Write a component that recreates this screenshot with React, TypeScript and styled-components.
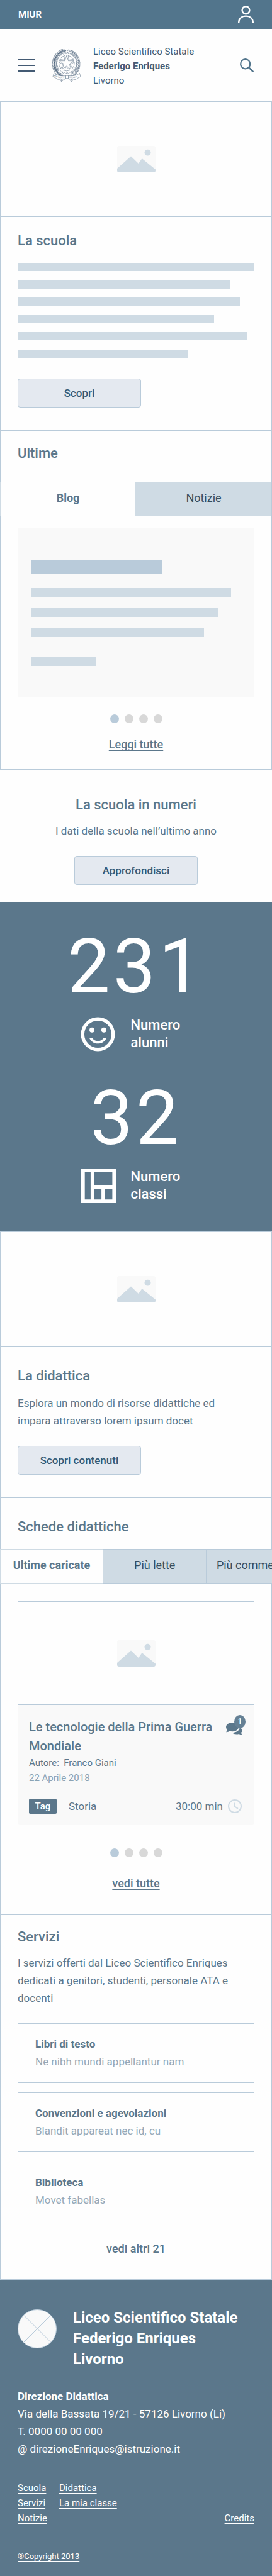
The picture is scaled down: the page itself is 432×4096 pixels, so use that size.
import React, { useState } from 'react';
import styled, { createGlobalStyle, ThemeProvider } from 'styled-components';

const theme = {
  page: '#fefefe',
  ink: '#435a73',
  navy: '#335975',
  steel: '#5b778b',
  bar: '#52758c',
  line: '#b9cbda',
  mist: '#cfdbe4',
  fog: '#e4e9f0',
  panel: '#f9f9f9',
  muted: '#95a8b7',
  dot: '#d8d8d8',
};

const GlobalStyle = createGlobalStyle`
  *, *::before, *::after { box-sizing: border-box; }
  body {
    margin: 0;
    background: ${theme.page};
    color: ${theme.steel};
    font: 400 17px/28px Roboto, "Liberation Sans", sans-serif;
  }
  h1, h2, h3, p, ul { margin: 0; padding: 0; }
  ul { list-style: none; }
  button { font: inherit; color: inherit; padding: 0; border: 0; background: none; cursor: pointer; }
  svg { display: block; flex: none; }
`;

/* ---------- top of the page ---------- */

const TopBar = styled.div`
  display: flex;
  align-items: center;
  justify-content: space-between;
  height: 46px;
  padding: 0 29px;
  background: ${theme.bar};
  color: #fff;
`;

const Ministry = styled.a`
  color: inherit;
  font-size: 15px;
  font-weight: 700;
  text-decoration: none;
`;

const Header = styled.header`
  display: flex;
  align-items: center;
  padding: 21px 29px 21px 28px;
`;

const MenuButton = styled.button`
  display: grid;
  gap: 7px;
  width: 28px;
  margin-right: 27px;
`;

const MenuLine = styled.span`
  height: 2px;
  background: ${theme.ink};
`;

const SchoolName = styled.h1`
  flex: 1;
  margin-left: 19px;
  padding-top: 4px;
  color: ${theme.ink};
  font-size: 15px;
  font-weight: 400;
  line-height: 23px;
`;

const NameLine = styled.span<{ $strong?: boolean }>`
  display: block;
  font-weight: ${p => (p.$strong ? 700 : 400)};
`;

/* ---------- shared parts ---------- */

const Frame = styled.section`
  border: 1px solid ${theme.line};
`;

const Placeholder = styled.div`
  display: flex;
  align-items: center;
  justify-content: center;
  height: 183px;
  border-bottom: 1px solid ${theme.line};
`;

const Block = styled.div<{ $top: number; $bottom: number; $ruled?: boolean }>`
  padding: ${p => p.$top}px 27px ${p => p.$bottom}px;
  border-bottom: ${p => (p.$ruled ? `1px solid ${theme.line}` : '0')};
`;

const Heading = styled.h2`
  font-size: 22px;
  font-weight: 500;
  line-height: 30px;
`;

const Lead = styled.p<{ $gap: number }>`
  margin: ${p => p.$gap}px 0 26px;
  padding-right: 20px;
`;

const ActionButton = styled.button`
  width: 196px;
  height: 46px;
  border: 1px solid ${theme.line};
  border-radius: 4px;
  background: ${theme.fog};
  color: ${theme.navy};
  font-weight: 500;
`;

const Bar = styled.div<{ $width: number; $height?: number; $dark?: boolean }>`
  width: ${p => p.$width}%;
  height: ${p => p.$height ?? 14}px;
  background: ${p => (p.$dark ? theme.line : theme.mist)};
`;

const TextBars = styled.div`
  display: flex;
  flex-direction: column;
  justify-content: space-between;
  height: 151px;
  margin: 20px 0 33px;
`;

const TabList = styled.div`
  display: flex;
  height: 55px;
  margin: 0 -1px;
  overflow: hidden;
`;

const Tab = styled.button<{ $basis: number }>`
  flex: 0 0 ${p => p.$basis}%;
  padding-bottom: 3px;
  border: solid ${theme.line};
  border-width: 1px 1px 1px 0;
  background: ${theme.mist};
  color: #364d60;
  font-size: 18px;
  white-space: nowrap;

  &[aria-selected='true'] {
    border-color: ${theme.mist};
    background: transparent;
    color: ${theme.steel};
    font-weight: 700;
  }

  &:first-child { border-left-width: 1px; }
`;

const PagerRow = styled.div<{ $top: number; $bottom: number }>`
  display: flex;
  justify-content: center;
  gap: 9px;
  padding: ${p => p.$top}px 0 ${p => p.$bottom}px;
`;

const PagerDot = styled.button`
  width: 14px;
  height: 14px;
  border-radius: 50%;
  background: ${theme.dot};

  &[aria-current='true'] { background: ${theme.line}; }
`;

const MoreRow = styled.div<{ $bottom: number }>`
  padding-bottom: ${p => p.$bottom}px;
  line-height: 24px;
  text-align: center;
`;

const MoreLink = styled.a`
  color: inherit;
  font-size: 18px;
  font-weight: 500;
  text-decoration: underline 1px;
  text-decoration-skip-ink: none;
  text-underline-offset: 3px;
`;

/* ---------- blog preview ---------- */

const Preview = styled.div`
  margin: 18px 27px 0;
  padding: 51px 20px 42px 21px;
  background: ${theme.panel};
`;

const PreviewLines = styled.div`
  display: grid;
  gap: 18px;
  margin: 23px 0 31px;
`;

const PreviewRule = styled.div`
  width: 31%;
  height: 1px;
  margin-top: 6px;
  background: ${theme.line};
`;

/* ---------- school in numbers ---------- */

const NumbersIntro = styled.section`
  padding: 41px 28px 27px;
  text-align: center;

  ${Lead} { padding-right: 0; }
`;

const Numbers = styled.section`
  display: grid;
  justify-items: center;
  gap: 46px;
  padding: 43px 28px 45px;
  background: ${theme.steel};
  color: #fff;
`;

const Stat = styled.div`
  display: grid;
  justify-items: center;
  gap: 19px;
`;

const Figure = styled.div`
  font-size: 120px;
  letter-spacing: 5px;
  line-height: 120px;
`;

const StatLabel = styled.div`
  display: flex;
  align-items: center;
  gap: 24px;
  font-size: 22px;
  font-weight: 500;
  line-height: 28px;
`;

const StatText = styled.div`
  width: 96px;
`;

/* ---------- teaching card ---------- */

const Card = styled.article`
  margin: 28px 27px 0;
`;

const CardImage = styled.div`
  display: flex;
  align-items: center;
  justify-content: center;
  height: 165px;
  border: 1px solid ${theme.line};
`;

const CardBody = styled.div`
  padding: 16px 14px 18px 18px;
  border-radius: 4px;
  background: ${theme.panel};
`;

const CardHead = styled.div`
  display: flex;
  justify-content: space-between;
`;

const CardTitle = styled.h3`
  width: 304px;
  padding-top: 4px;
  font-size: 20px;
  font-weight: 500;
  line-height: 30px;
`;

const CommentButton = styled.button`
  position: relative;
  display: flex;
  align-items: flex-end;
  width: 31px;
  height: 32px;
`;

const Badge = styled.span`
  position: absolute;
  top: 0;
  right: 0;
  width: 18px;
  height: 21px;
  border-radius: 50%;
  background: #658094;
  color: #fff;
  font-size: 13px;
  font-weight: 500;
  line-height: 20px;
  text-align: center;
`;

const CardMeta = styled.p<{ $muted?: boolean }>`
  color: ${p => (p.$muted ? '#8ba2b3' : 'inherit')};
  font-size: 15px;
  line-height: 24px;
`;

const CardFoot = styled.div`
  display: flex;
  align-items: center;
  height: 24px;
  margin: 21px 6px 0 0;
`;

const Tag = styled.span`
  width: 44px;
  margin-right: 19px;
  border-radius: 2px;
  background: ${theme.steel};
  color: #fff;
  font-size: 15px;
  font-weight: 500;
  line-height: 24px;
  text-align: center;
`;

const Duration = styled.span`
  display: flex;
  align-items: center;
  gap: 8px;
  margin-left: auto;
`;

/* ---------- services ---------- */

const ServiceList = styled.ul`
  display: grid;
  gap: 15px;
  margin-bottom: 32px;
`;

const Service = styled.li`
  padding: 18px 27px 19px;
  border: 1px solid ${theme.line};
`;

const ServiceName = styled.h3`
  font-size: 17px;
  font-weight: 700;
  line-height: 28px;
`;

const ServiceText = styled.p`
  color: ${theme.muted};
`;

/* ---------- footer ---------- */

const Footer = styled.footer`
  padding: 44px 28px 21px;
  background: ${theme.steel};
  color: #fff;
`;

const FooterHead = styled.div`
  display: flex;
  align-items: flex-start;
  gap: 26px;
`;

const FooterMark = styled.svg`
  margin-top: 3px;
`;

const FooterName = styled.h2`
  font-size: 24px;
  font-weight: 700;
  line-height: 33px;
`;

const Address = styled.address`
  margin: 28px 0 36px;
  font-style: normal;
`;

const AddressLine = styled.p<{ $strong?: boolean }>`
  font-weight: ${p => (p.$strong ? 700 : 400)};
`;

const FooterNav = styled.nav`
  display: grid;
  grid-template-columns: 66px 1fr auto;
  font-size: 15px;
  line-height: 24px;
`;

const CreditsSlot = styled.div`
  align-self: end;
`;

const FooterLink = styled.a<{ $small?: boolean }>`
  color: inherit;
  font-size: ${p => (p.$small ? 13 : 15)}px;
  text-decoration: underline 1px;
  text-decoration-skip-ink: none;
  text-underline-offset: 3px;
`;

const Copyright = styled.p`
  margin-top: 39px;
  font-size: 13px;
  line-height: 20px;
`;

/* ---------- drawings ---------- */

const PictureIcon = () => (
  <svg width="61" height="42" viewBox="0 0 61 42" aria-hidden="true">
    <rect width="61" height="42" rx="3" fill="#f9f9f9" />
    <ellipse cx="48.5" cy="10.7" rx="5" ry="4.9" fill={theme.mist} />
    <path d="M0 36 22 16.500l12 11.500 5.500-8L61 37.500V39a3 3 0 0 1-3 3H3a3 3 0 0 1-3-3z" fill={theme.mist} />
  </svg>
);

const UserIcon = () => (
  <svg width="25" height="28" viewBox="0 0 25 28" fill="none" stroke="#fff" strokeWidth="2.400" aria-hidden="true">
    <ellipse cx="12.500" cy="7.200" rx="5.900" ry="6" />
    <path d="M1.200 28v-1.500C1.200 20.500 6 16.600 12.500 16.600s11.300 3.900 11.300 9.900V28" />
  </svg>
);

const SearchIcon = () => (
  <svg width="22" height="22" viewBox="0 0 22 22" fill="none" stroke={theme.bar} aria-hidden="true">
    <circle cx="8.700" cy="8.700" r="7.600" strokeWidth="2.200" />
    <path d="m14.300 14.300 6.300 6.300" strokeWidth="2.600" strokeLinecap="round" />
  </svg>
);

const SmileIcon = () => (
  <svg width="55" height="55" viewBox="1.800 1.800 20.400 20.400" fill="#fff" aria-hidden="true">
    <circle cx="15.500" cy="9.500" r="1.500" />
    <circle cx="8.500" cy="9.500" r="1.500" />
    <circle cx="12" cy="12" r="9" fill="none" stroke="#fff" strokeWidth="2" />
    <path d="M12 16c-1.480 0-2.750-.81-3.450-2H6.880c.8 2.050 2.790 3.500 5.120 3.500s4.320-1.450 5.120-3.500h-1.670c-.7 1.190-1.970 2-3.450 2z" />
  </svg>
);

const ClassesIcon = () => (
  <svg width="55" height="55" viewBox="0 0 55 55" aria-hidden="true">
    <path
      fill="#fff"
      fillRule="evenodd"
      d="M0 0h55v55H0zM5.700 5.700v43.600h9.200V5.700zM20.600 5.700v20.800h28.800V5.700zM20.600 32v17.300h11.500V32zM37.900 32v17.300h11.500V32z"
    />
  </svg>
);

const CommentsIcon = () => (
  <svg width="26" height="20" viewBox="0 0 26 20" fill={theme.steel} aria-hidden="true">
    <path d="M10.200 0C15.800 0 20 3 20 7s-4.200 7.200-9.800 7.200c-1.500 0-3-.2-4.300-.7C4.500 14.500 2.500 15.200 0 15.300c1.300-1.200 2-2.600 2-3.700C.8 10.400 0 8.800 0 7c0-4 4.600-7 10.200-7z" />
    <path d="M21.300 9.200c2.700-.7 4.300 1 4.300 3.300 0 1.500-.6 2.600-1.600 3.400.1 1.200.8 2.400 1.800 3.500-2 0-3.700-.4-5.200-1.400-1.300.4-2.700.6-4 .6-2.900 0-5.400-.8-7-2.500 6-.1 10.900-2.700 11.700-6.900z" />
  </svg>
);

const ClockIcon = () => (
  <svg width="22" height="22" viewBox="0 0 22 22" fill="none" stroke={theme.mist} strokeWidth="2" aria-hidden="true">
    <circle cx="11" cy="11" r="10" />
    <path d="M11 5.500v6l5 3.300" />
  </svg>
);

const rad = (deg: number) => (deg * Math.PI) / 180;
const at = (cx: number, cy: number, r: number, deg: number) =>
  `${(cx + r * Math.cos(rad(deg))).toFixed(2)} ${(cy + r * Math.sin(rad(deg))).toFixed(2)}`;

const STAR = Array.from({ length: 10 }, (_, i) => at(22.8, 22.4, i % 2 ? 4.6 : 12, -90 + i * 36)).join('L');

// The openings of the cog wheel between the arms of the star
const WINDOWS = Array.from({ length: 5 }, (_, i) => {
  const mid = -54 + i * 72;
  return `M${at(22.8, 22.4, 6, mid)}L${at(22.8, 22.4, 12.4, mid - 25)}A12.4 12.4 0 0 1 ${at(22.8, 22.4, 12.4, mid + 25)}Z`;
}).join('');

const COG = Array.from({ length: 24 }, (_, i) => {
  const a = i * 15;
  return `${at(22.8, 22.4, 15.2, a)}L${at(22.8, 22.4, 16.8, a + 2)}L${at(22.8, 22.4, 16.8, a + 7)}L${at(22.8, 22.4, 15.2, a + 9)}`;
}).join('L');

const OLIVE = Array.from({ length: 13 }, (_, i) => {
  const a = 118 + i * 11.2;
  return { x: 22.8 + 19.2 * Math.cos(rad(a)), y: 23.5 + 21 * Math.sin(rad(a)), turn: a + 90 };
});

const OAK = OLIVE.map(l => ({ x: 45.6 - l.x, y: l.y, turn: 180 - l.turn }));

const Emblem = () => (
  <svg width="46" height="52" viewBox="0 0 46 52" fill="none" stroke={theme.ink} strokeWidth="0.500" role="img" aria-label="Repubblica Italiana">
    <path d={`M${COG}Z`} />
    <path d={WINDOWS} />
    <path d={`M${STAR}Z`} fill={theme.page} />
    {OLIVE.map((l, i) => (
      <g key={i} transform={`translate(${l.x} ${l.y}) rotate(${l.turn})`} fill={theme.page}>
        <path d="M-4 0C-2-3.500 2-3.800 5-3 3-.5 0 1-4 0z" />
        <path d="M-4 0C-2 3.200 2 3.400 5 2.800 3 .2 0-1-4 0z" />
        <path d="M-5 0C-2-1.500 3-1.500 5.500 0 3 1.500-2 1.500-5 0zM-5 0H4" strokeWidth="0.700" />
      </g>
    ))}
    {OAK.map((l, i) => (
      <g key={i} transform={`translate(${l.x} ${l.y}) rotate(${l.turn})`} fill={theme.page}>
        <path d="M-4 0c0-2 1.500-2.500 2.500-1.800 0-1.800 2-2 2.700-.8.8-1.400 2.800-1 2.800.6 1.300.4 1.300 1.800 0 2 .2 1.900-1.700 2.300-2.700 1.100C.7 2.500-1.200 2.500-1.500 1.200-2.700 2.300-4 1.800-4 0z" />
        <path d="M-4 0h7M-1 0l1-1.500M1 0l1-1.300M-1 0l1 1.500" />
      </g>
    ))}
    <g fill={theme.page}>
      <path d="M21 43c-2.500 2.800-5 5-8 7l1.500.3-.2 1.500C18 49.500 21 47 23.500 44zM25 43c2 2.500 4.500 5 7.500 7l-1.500.3.200 1.500C28 49.800 25 47.500 22.500 44z" />
      <path d="M2.500 38.500C7 42 14 43.500 22 42.500l-.5 5C16 48.500 13 47 9.500 48.800 7 46.500 4 45.500 1 44z" />
      <path d="M43.500 38.500C39 42 32 43.500 25 42.500l.5 5c5 1 8-.5 11.500 1.300 2.500-2.300 5-3.300 8-4.800z" />
      <ellipse cx="23.500" cy="44.500" rx="2.300" ry="2.700" />
    </g>
    <path id="ribbon-left" d="M2.200 42.800Q10 47 21.500 46" stroke="none" />
    <path id="ribbon-right" d="M26.500 46Q36 47 44.500 42.500" stroke="none" />
    <g fill={theme.ink} stroke="none" fontFamily="Liberation Serif, serif" fontSize="2.800">
      <text><textPath href="#ribbon-left">REPVBBLICA</textPath></text>
      <text><textPath href="#ribbon-right">ITALIANA</textPath></text>
    </g>
  </svg>
);

/* ---------- behaviour ---------- */

const Tabs = ({ label, items, basis }: { label: string; items: string[]; basis: number }) => {
  const [active, setActive] = useState(0);
  return (
    <TabList role="tablist" aria-label={label}>
      {items.map((item, i) => (
        <Tab key={item} role="tab" $basis={basis} aria-selected={i === active} onClick={() => setActive(i)}>
          {item}
        </Tab>
      ))}
    </TabList>
  );
};

const Pager = ({ top, bottom }: { top: number; bottom: number }) => {
  const [page, setPage] = useState(0);
  return (
    <PagerRow $top={top} $bottom={bottom}>
      {[0, 1, 2, 3].map(i => (
        <PagerDot key={i} aria-label={`Pagina ${i + 1}`} aria-current={i === page} onClick={() => setPage(i)} />
      ))}
    </PagerRow>
  );
};

const SCHOOL_BARS = [100, 90, 94, 83, 97, 72];

const SERVICES = [
  ['Libri di testo', 'Ne nibh mundi appellantur nam'],
  ['Convenzioni e agevolazioni', 'Blandit appareat nec id, cu'],
  ['Biblioteca', 'Movet fabellas'],
];

const FOOTER_LINKS = [
  ['Scuola', 'Servizi', 'Notizie'],
  ['Didattica', 'La mia classe'],
];

export default function App() {
  return (
    <ThemeProvider theme={theme}>
      <GlobalStyle />
      <TopBar>
        <Ministry href="#miur">MIUR</Ministry>
        <button aria-label="Accedi"><UserIcon /></button>
      </TopBar>
      <Header>
        <MenuButton aria-label="Menu">
          <MenuLine /><MenuLine /><MenuLine />
        </MenuButton>
        <Emblem />
        <SchoolName>
          <NameLine>Liceo Scientifico Statale</NameLine>
          <NameLine $strong>Federigo Enriques</NameLine>
          <NameLine>Livorno</NameLine>
        </SchoolName>
        <button aria-label="Cerca"><SearchIcon /></button>
      </Header>

      <main>
        <Frame>
          <Placeholder><PictureIcon /></Placeholder>
          <Block $top={23} $bottom={36} $ruled>
            <Heading>La scuola</Heading>
            <TextBars>
              {SCHOOL_BARS.map((w, i) => <Bar key={i} $width={w} $height={13} />)}
            </TextBars>
            <ActionButton>Scopri</ActionButton>
          </Block>
          <Block $top={21} $bottom={30}>
            <Heading>Ultime</Heading>
          </Block>
          <Tabs label="Ultime" items={['Blog', 'Notizie']} basis={50} />
          <Preview>
            <Bar $width={62} $height={22} $dark />
            <PreviewLines>
              <Bar $width={95} />
              <Bar $width={89} />
              <Bar $width={82} />
            </PreviewLines>
            <Bar $width={31} $height={15} />
            <PreviewRule />
          </Preview>
          <Pager top={28} bottom={22} />
          <MoreRow $bottom={27}><MoreLink href="#blog">Leggi tutte</MoreLink></MoreRow>
        </Frame>

        <NumbersIntro>
          <Heading>La scuola in numeri</Heading>
          <Lead $gap={12}>I dati della scuola nell’ultimo anno</Lead>
          <ActionButton>Approfondisci</ActionButton>
        </NumbersIntro>
        <Numbers>
          <Stat>
            <Figure>231</Figure>
            <StatLabel><SmileIcon /><StatText>Numero<br />alunni</StatText></StatLabel>
          </Stat>
          <Stat>
            <Figure>32</Figure>
            <StatLabel><ClassesIcon /><StatText>Numero<br />classi</StatText></StatLabel>
          </Stat>
        </Numbers>

        <Frame>
          <Placeholder><PictureIcon /></Placeholder>
          <Block $top={31} $bottom={36} $ruled>
            <Heading>La didattica</Heading>
            <Lead $gap={14}>Esplora un mondo di risorse didattiche ed impara attraverso lorem ipsum docet</Lead>
            <ActionButton>Scopri contenuti</ActionButton>
          </Block>
          <Block $top={31} $bottom={20}>
            <Heading>Schede didattiche</Heading>
          </Block>
          <Tabs label="Schede didattiche" items={['Ultime caricate', 'Più lette', 'Più commentate']} basis={38} />
          <Card>
            <CardImage><PictureIcon /></CardImage>
            <CardBody>
              <CardHead>
                <CardTitle>Le tecnologie della Prima Guerra Mondiale</CardTitle>
                <CommentButton aria-label="Commenti">
                  <CommentsIcon />
                  <Badge>1</Badge>
                </CommentButton>
              </CardHead>
              <CardMeta>Autore:&nbsp; Franco Giani</CardMeta>
              <CardMeta $muted>22 Aprile 2018</CardMeta>
              <CardFoot>
                <Tag>Tag</Tag>
                Storia
                <Duration>30:00 min <ClockIcon /></Duration>
              </CardFoot>
            </CardBody>
          </Card>
          <Pager top={37} bottom={30} />
          <MoreRow $bottom={36}><MoreLink href="#schede">vedi tutte</MoreLink></MoreRow>
        </Frame>

        <Frame>
          <Block $top={20} $bottom={0}>
            <Heading>Servizi</Heading>
            <Lead $gap={12}>
              I servizi offerti dal Liceo Scientifico Enriques dedicati a genitori, studenti, personale ATA e docenti
            </Lead>
            <ServiceList>
              {SERVICES.map(([name, text]) => (
                <Service key={name}>
                  <ServiceName>{name}</ServiceName>
                  <ServiceText>{text}</ServiceText>
                </Service>
              ))}
            </ServiceList>
          </Block>
          <MoreRow $bottom={36}><MoreLink href="#servizi">vedi altri 21</MoreLink></MoreRow>
        </Frame>
      </main>

      <Footer>
        <FooterHead>
          <FooterMark width="62" height="62" viewBox="0 0 62 62" fill="#f9f9f9" stroke={theme.line} aria-hidden="true">
            <circle cx="31" cy="31" r="30.5" />
            <path d="M10 9.500 52.500 52M52.500 9.500 10 52" />
          </FooterMark>
          <FooterName>Liceo Scientifico Statale<br />Federigo Enriques<br />Livorno</FooterName>
        </FooterHead>
        <Address>
          <AddressLine $strong>Direzione Didattica</AddressLine>
          <AddressLine>Via della Bassata 19/21 - 57126 Livorno (Li)</AddressLine>
          <AddressLine>T. 0000 00 00 000</AddressLine>
          <AddressLine>@ direzioneEnriques@istruzione.it</AddressLine>
        </Address>
        <FooterNav aria-label="Piè di pagina">
          {FOOTER_LINKS.map((column, i) => (
            <ul key={i}>
              {column.map(item => (
                <li key={item}><FooterLink href={`#${item.toLowerCase().replace(/ /g, '-')}`}>{item}</FooterLink></li>
              ))}
            </ul>
          ))}
          <CreditsSlot><FooterLink href="#credits">Credits</FooterLink></CreditsSlot>
        </FooterNav>
        <Copyright><FooterLink href="#copyright" $small>®Copyright 2013</FooterLink></Copyright>
      </Footer>
    </ThemeProvider>
  );
}
